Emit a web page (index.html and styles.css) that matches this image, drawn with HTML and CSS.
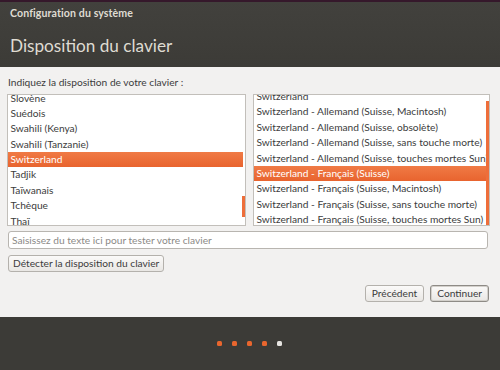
FILE: index.html
```html
<!DOCTYPE html>
<html lang="fr">
<head>
<meta charset="utf-8">
<title>Disposition du clavier</title>
<link rel="stylesheet" href="styles.css">
</head>
<body>
<div class="strip"></div>
<header class="header">
  <div class="app-title">Configuration du système</div>
  <h1 class="page-title">Disposition du clavier</h1>
</header>
<main class="content">
  <div class="label">Indiquez la disposition de votre clavier :</div>
  <div class="lists">
    <div class="list list-left">
      <ul class="rows rows-left">
        <li>Slovène</li>
        <li>Suédois</li>
        <li>Swahili (Kenya)</li>
        <li>Swahili (Tanzanie)</li>
        <li class="sel">Switzerland</li>
        <li>Tadjik</li>
        <li>Taïwanais</li>
        <li>Tchèque</li>
        <li>Thaï</li>
      </ul>
      <div class="sb sb-left"></div>
    </div>
    <div class="list list-right">
      <ul class="rows rows-right">
        <li>Switzerland</li>
        <li>Switzerland - Allemand (Suisse, Macintosh)</li>
        <li>Switzerland - Allemand (Suisse, obsolète)</li>
        <li>Switzerland - Allemand (Suisse, sans touche morte)</li>
        <li>Switzerland - Allemand (Suisse, touches mortes Sun)</li>
        <li class="sel">Switzerland - Français (Suisse)</li>
        <li>Switzerland - Français (Suisse, Macintosh)</li>
        <li>Switzerland - Français (Suisse, sans touche morte)</li>
        <li>Switzerland - Français (Suisse, touches mortes Sun)</li>
      </ul>
      <div class="sb sb-right"></div>
    </div>
  </div>
  <input class="test-input" type="text" placeholder="Saisissez du texte ici pour tester votre clavier">
  <div class="detect-row"><button class="btn">Détecter la disposition du clavier</button></div>
  <div class="nav-row">
    <button class="btn">Précédent</button>
    <button class="btn btn-focus">Continuer</button>
  </div>
</main>
<footer class="footer">
  <span class="dot on"></span>
  <span class="dot on"></span>
  <span class="dot on"></span>
  <span class="dot on"></span>
  <span class="dot cur"></span>
</footer>
</body>
</html>
```
FILE: styles.css
```css
* { box-sizing: border-box; }
html, body { margin: 0; padding: 0; }
body {
  width: 500px;
  height: 370px;
  overflow: hidden;
  background: #f2f1f0;
  font-family: Lato, "Open Sans", "DejaVu Sans", sans-serif;
  color: #3c3c3c;
  font-size: 10.2px;
}
.strip { height: 2px; background: #35182b; }
.header {
  height: 65px;
  background: linear-gradient(#42413d, #3c3b37);
  padding: 5px 10px 0;
  color: #dfdbd2;
}
.app-title {
  font-size: 10.6px;
  font-weight: bold;
  line-height: 12px;
  letter-spacing: 0.1px;
}
.page-title {
  margin: 17px 0 0;
  font-size: 17.2px;
  font-weight: normal;
  line-height: 20px;
}
.content {
  height: 250px;
  padding: 8px 7px 0 7px;
  display: flex;
  flex-direction: column;
}
.label { line-height: 14px; margin-left: 1px; }
.lists {
  display: flex;
  gap: 7px;
  margin-top: 5px;
  height: 132px;
}
.list {
  position: relative;
  background: #fff;
  border: 1px solid #c2bfba;
  overflow: hidden;
}
.list-left { width: 239px; }
.list-right { width: 237px; }
.rows { list-style: none; margin: 0; padding: 0; }
.rows-left { margin-top: -4.5px; }
.rows-right { margin-top: -6px; }
.rows li {
  height: 15.4px;
  line-height: 15.4px;
  padding-left: 2.5px;
  white-space: nowrap;
}
.rows li.sel {
  background: linear-gradient(#f07a45, #e8642f);
  color: #fff;
}
.list-left .rows li.sel { margin-right: 2px; }
.sb {
  position: absolute;
  right: 0;
  width: 3px;
  background: #ee6e3a;
}
.sb-left { top: 101px; height: 21px; }
.sb-right { top: 6px; height: 126px; right: 0; }
.test-input {
  margin: 5px 0 0 1px;
  width: 480px;
  height: 18px;
  border: 1px solid #b8b5b0;
  border-radius: 3px;
  background: #fff;
  font: inherit;
  padding: 0 3px;
  color: #3c3c3c;
}
.test-input::placeholder { color: #8c8a87; }
.detect-row { margin: 6px 0 0 1px; }
.btn {
  font: inherit;
  color: #3c3c3c;
  height: 17px;
  padding: 0 4px;
  border: 1px solid #b4b1ac;
  border-radius: 3px;
  background: linear-gradient(#fbfaf9, #e9e7e4);
  line-height: 15px;
}
.nav-row {
  display: flex;
  justify-content: flex-end;
  gap: 6px;
  margin-top: 13px;
  padding-right: 4px;
}
.nav-row .btn { height: 17px; padding: 0 6px; }
.btn-focus { border-color: #8e8b86; box-shadow: inset 0 0 0 1px #d3d0cb; }
.footer {
  height: 53px;
  background: #3c3b37;
  display: flex;
  justify-content: center;
  align-items: center;
  gap: 10px;
  padding-right: 1px;
}
.dot {
  width: 5px;
  height: 5px;
  border-radius: 1.5px;
  background: #e9662e;
}
.dot.cur { background: #e6e4e1; }
```
